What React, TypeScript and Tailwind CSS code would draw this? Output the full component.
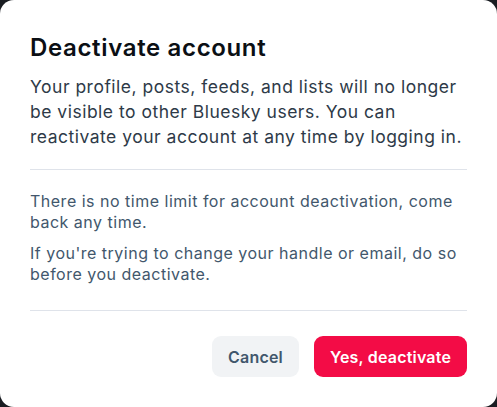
import React from "react";

export default function App() {
  return (
    <div className="w-[497px] h-[407px] bg-[#1a1d22]" style={{ fontFamily: "Inter, 'Noto Sans', sans-serif" }}>
      <div className="w-full h-full bg-white rounded-[14px] px-[30px] pt-[33px] flex flex-col">
        <h1 className="text-[24px] leading-[30px] font-semibold tracking-[0.65px] text-[#0b0f14]">Deactivate account</h1>
        <p className="mt-[11px] text-[17.5px] leading-[25px] tracking-[0.5px] text-[#2e3a48]">
          Your profile, posts, feeds, and lists will no longer be visible to other Bluesky users. You can reactivate your account at any time by logging in.
        </p>
        <div className="mt-[20px] h-px bg-[#dfe3ea]" />
        <div className="mt-[21px] flex flex-col gap-[10px] text-[16px] leading-[21px] tracking-[0.5px] text-[#42576c]">
          <p>There is no time limit for account deactivation, come back any time.</p>
          <p>If you're trying to change your handle or email, do so before you deactivate.</p>
        </div>
        <div className="mt-[25px] h-px bg-[#dfe3ea]" />
        <div className="mt-[25px] flex justify-end gap-[15px]">
          <button className="h-[41px] w-[87px] rounded-[9px] bg-[#f1f3f5] text-[#42576c] text-[16px] font-semibold tracking-[0.2px]">Cancel</button>
          <button className="h-[41px] w-[153px] rounded-[9px] bg-[#f30c46] text-white text-[16px] font-semibold tracking-[0.2px]">Yes, deactivate</button>
        </div>
      </div>
    </div>
  );
}
